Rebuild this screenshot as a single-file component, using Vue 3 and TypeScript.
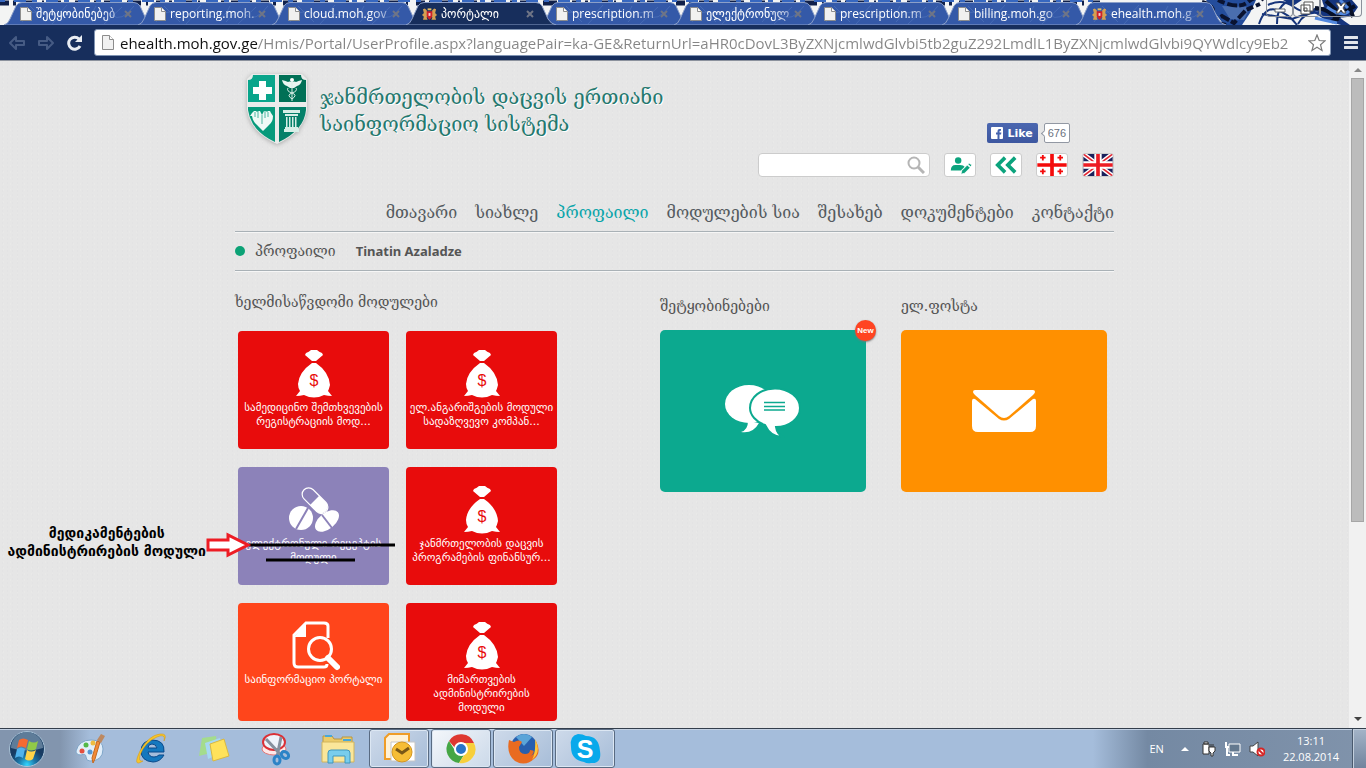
<script setup lang="ts">
import { ref } from 'vue'

interface Tab { title: string; crest?: boolean; active?: boolean }
interface Module { lines: string[]; icon: 'bag' | 'pills' | 'report'; tone: string; replaced?: boolean }

const tabs: Tab[] = [
  { title: 'შეტყობინებებ' },
  { title: 'reporting.moh.' },
  { title: 'cloud.moh.gov' },
  { title: 'პორტალი', crest: true, active: true },
  { title: 'prescription.m' },
  { title: 'ელექტრონულ' },
  { title: 'prescription.m' },
  { title: 'billing.moh.go' },
  { title: 'ehealth.moh.g', crest: true },
]

const nav = ['მთავარი', 'სიახლე', 'პროფაილი', 'მოდულების სია', 'შესახებ', 'დოკუმენტები', 'კონტაქტი']

const modules: Module[] = [
  { lines: ['სამედიცინო შემთხვევების', 'რეგისტრაციის მოდ...'], icon: 'bag', tone: 'red' },
  { lines: ['ელ.ანგარიშგების მოდული', 'სადაზღვევო კომპან...'], icon: 'bag', tone: 'red' },
  { lines: ['ელექტრონული რეცეპტის', 'მოდული'], icon: 'pills', tone: 'violet', replaced: true },
  { lines: ['ჯანმრთელობის დაცვის', 'პროგრამების ფინანსურ...'], icon: 'bag', tone: 'red' },
  { lines: ['საინფორმაციო პორტალი'], icon: 'report', tone: 'orange' },
  { lines: ['მიმართვების', 'ადმინისტრირების', 'მოდული'], icon: 'bag', tone: 'red' },
]

const address = ref('ehealth.moh.gov.ge/Hmis/Portal/UserProfile.aspx?languagePair=ka-GE&ReturnUrl=aHR0cDovL3ByZXNjcmlwdGlvbi5tb2guZ292LmdlL1ByZXNjcmlwdGlvbi9QYWdlcy9Eb2')
const query = ref('')
</script>

<template>
  <div class="desktop">
    <div class="chrome">
      <svg class="floral" viewBox="0 0 1366 25" preserveAspectRatio="xMaxYMin slice" aria-hidden="true">
        <rect width="1366" height="25" fill="#f3f4f4" />
        <path d="M0 3H1100" stroke="#10204a" stroke-width="5" stroke-dasharray="9 4 3 7 14 5 2 8" />
        <path d="M0 1H1100" stroke="#3768c0" stroke-width="2" stroke-dasharray="5 9 12 6" />
        <path d="M1206 0q8 12 18 25h18l8-12 6-13z" fill="#244d9c" />
        <path d="M1222 6l28 1-6 13-14-1z" fill="#4a6eaf" />
        <path d="M1202 2q14 4 10 12t14 11M1218 0q20 10 30 2t16-2M1212 22l10-6 12 7 12-13 14-6" fill="none" stroke="#0a1330" stroke-width="4" stroke-dasharray="7 3 10 2" />
        <path d="M1259 24q6-18 18-14t20 15M1277 24q0-20 13-23M1268 5q14-7 26 2t24 0M1262 14l30 5 34-12M1298 24q8-15 24-10" fill="none" stroke="#17357b" stroke-width="2" />
        <path d="M1283 0l10 6 9-6zM1322 0q3 14 16 17t20-10l-6-7zM1313 12l14 9 14 4h9q-12-8-20-16z" fill="#15357e" />
        <path d="M1315 8q16 1 23 13M1326 1l14 13 15-8M1331 22l18-13M1348 2l5 15" fill="none" stroke="#071027" stroke-width="4" />
        <path d="M1327 7q15 11 22 4M1315 18l22 5M1340 0l8 8" fill="none" stroke="#5288df" stroke-width="3" />
      </svg>

      <div class="tabs" role="tablist">
        <button v-for="(tab, i) in tabs" :key="i" class="tab" :class="{ active: tab.active }" role="tab" type="button">
          <svg class="tab-shape" viewBox="0 0 150 23" preserveAspectRatio="none" aria-hidden="true">
            <path d="M0 23Q4 22 6 17L12 4Q14 .5 18 .5H130Q134 .5 136 4L142 17Q145 22 150 23z" :fill="tab.active ? '#172e5c' : '#3459a8'" stroke="#8b9fc8" />
            <path v-if="!tab.active" d="M18 20q8-14 22-9t23-8M48 22q10-14 24-8t20-10M88 20q11-15 20-7t22-9M100 22l18-17M26 4l16 16" fill="none" stroke="#5478bd" stroke-width="1" opacity=".55" />
          </svg>
          <svg v-if="tab.crest" class="tab-icon crest" viewBox="0 0 16 14" aria-hidden="true">
            <path d="M1 2l2-1 2 2 1 4-1 4 1 2H1l1-3-2-2 2-2zM15 2l-2-1-2 2-1 4 1 4-1 2h5l-1-3 2-2-2-2z" fill="#d4a052" />
            <path d="M5 4h6v5q-1 3-3 4-2-1-3-4z" fill="#cf222b" /><path d="M6 1h4v2H6z" fill="#e4bd62" /><path d="M7 6h2v3H7z" fill="#f3d3ce" />
          </svg>
          <svg v-else class="tab-icon" viewBox="0 0 12 14" aria-hidden="true"><path d="M.5.5h7l4 4v9H.5z" fill="#f1f1f0" stroke="#8d8d8d" /><path d="M7.500.5v4h4" fill="#fff" stroke="#8d8d8d" /></svg>
          <span class="tab-title">{{ tab.title }}</span>
          <svg class="tab-close" viewBox="0 0 8 8" aria-hidden="true"><path d="M1 1l6 6M7 1L1 7" stroke="#6f7586" stroke-width="2" /></svg>
        </button>
      </div>

      <div class="window-buttons">
        <button type="button" aria-label="Minimize"><svg viewBox="0 0 16 14"><path d="M3 8h10v3H3z" fill="#fff" stroke="#5b6068" /></svg></button>
        <button type="button" aria-label="Restore"><svg viewBox="0 0 16 14"><path d="M5 1h9v9H5zM2 4h9v9H2zM5 7h3v3H5z" fill="#fff" stroke="#555" /></svg></button>
        <button type="button" aria-label="Close"><svg viewBox="0 0 16 14"><path d="M3 2h3l2 3 2-3h3l-3 5 3 5h-3L8 9l-2 3H3l3-5z" fill="#fff" stroke="#555" /></svg></button>
      </div>

      <div class="toolbar">
        <button class="tool" type="button" aria-label="Back"><svg viewBox="0 0 18 16"><path d="M8 2L2 8l6 6v-4h8V6H8z" fill="none" stroke="#465b84" stroke-width="2" stroke-linejoin="round" /></svg></button>
        <button class="tool" type="button" aria-label="Forward"><svg viewBox="0 0 18 16"><path d="M10 2l6 6-6 6v-4H2V6h8z" fill="none" stroke="#465b84" stroke-width="2" stroke-linejoin="round" /></svg></button>
        <button class="tool" type="button" aria-label="Reload"><svg viewBox="0 0 18 16"><path d="M14 11a6 6 0 1 1-1-7" fill="none" stroke="#e9edf3" stroke-width="3" /><path d="M16 0v7H9z" fill="#e9edf3" /></svg></button>
        <div class="omnibox">
          <svg class="page-icon" viewBox="0 0 12 15" aria-hidden="true"><path d="M.5.500h7l4 4v10H.5z" fill="#f1f1f1" stroke="#8c8c8c" /><path d="M7.500.5v4h4" fill="#fff" stroke="#8c8c8c" /></svg>
          <input v-model="address" type="text" aria-label="Address" spellcheck="false" />
          <svg class="star" viewBox="0 0 18 18" aria-hidden="true"><path d="M9 1l2.200 5.500 5.800.4-4.500 3.800L14 16.500 9 13.300l-5 3.200 1.500-5.800L1 6.900l5.800-.4z" fill="#fff" stroke="#7b7b7b" stroke-width="1.200" /></svg>
        </div>
        <button class="menu" type="button" aria-label="Menu"><svg viewBox="0 0 14 15"><path d="M1 2.500h12M1 7.500h12M1 12.500h12" stroke="#e2e6ec" stroke-width="3" stroke-linecap="round" /></svg></button>
      </div>
    </div>

    <div class="viewport">
      <div class="page">
        <header class="masthead">
          <svg class="logo" viewBox="0 0 60 70" aria-hidden="true">
            <path d="M5 0H55L60 5V36Q57 58 30 70Q3 58 0 36V5z" fill="#e9ebea" />
            <path d="M6 1h22v27H1V6q5 0 5-5z" fill="#09a58b" /><path d="M32 1h22q0 5 5 5v22H32z" fill="#007056" />
            <path d="M1 33h27v35Q4 57 1 36z" fill="#079a7b" /><path d="M32 33h27v3q-2 20-27 32z" fill="#048069" />
            <path d="M12 7h7v6h6v7h-6v6h-7v-6H6v-7h6z" fill="#fff" />
            <circle cx="45" cy="6" r="2" fill="#fff" />
            <path d="M45 8q-3-1-4 0-2-1-6-2 1 5 5 6l3 2h4l3-2q4-1 5-6-4 1-6 2-1-1-4 0z" fill="#eaf5f1" />
            <path d="M45 7v20M41 14q-2 3 4 5t0 6M49 14q2 3-4 5t0 6" fill="none" stroke="#dcefe8" stroke-width="1" />
            <path d="M5 42l2-3 2-2h2l1 1 1-1h2l2 4 2-4h2l1 1 1-1h2l1 2 2 3q0 6-4 9l-6 6-6-6q-4-3-5-9z" fill="#effaf6" transform="translate(-2)" />
            <path d="M8 38v5M11 37v7M18 37v7M21 38v5M15 41v9" stroke="#079a7b" stroke-width=".7" />
            <path d="M36 36h17v3H36zM38 40h13v2H38zM39 43h1.500v10H39zM42 43h1.500v10H42zM45 43h1.500v10H45zM48 43h1.500v10H48zM38 53h13v2H38zM37 55h15v3H37z" fill="#d6eee7" />
          </svg>
          <h1>ჯანმრთელობის დაცვის ერთიანი<br />საინფორმაციო სისტემა</h1>
          <div class="side">
            <div class="social">
              <button class="like" type="button">
                <svg viewBox="0 0 12 12" aria-hidden="true"><rect width="12" height="12" rx="1" fill="#fff" /><path d="M10 2H8.500Q6.500 2 6.500 4v1.500H5v2h1.500V12h2V7.500h1.500l.4-2H8.500v-1q0-.7.7-.7H10z" fill="#4463ae" /></svg>Like
              </button>
              <span class="count">676</span>
            </div>
            <div class="tools">
              <label class="search">
                <input v-model="query" type="text" aria-label="ძიება" />
                <svg viewBox="0 0 18 18" aria-hidden="true"><circle cx="7" cy="7" r="5.500" fill="none" stroke="#b5b5b5" stroke-width="2" /><path d="M11 11l6 6" stroke="#b5b5b5" stroke-width="3" /></svg>
              </label>
              <button class="square" type="button" aria-label="Edit profile">
                <svg viewBox="0 0 32 24"><circle cx="14" cy="7" r="3.500" fill="#0ba37d" /><path d="M6 18q0-6 5-6h5q4 0 5 2l-4 4z" fill="#0ba37d" /><path d="M18 18l6-6 3 3-6 6-4 1zM24.500 11l1.500-1 3 2-1.500 2z" fill="#0ba37d" stroke="#fff" stroke-width=".8" /></svg>
              </button>
              <button class="square" type="button" aria-label="Back">
                <svg viewBox="0 0 32 24"><path d="M15 4l-8 8 8 8M26 4l-8 8 8 8" fill="none" stroke="#0ba37d" stroke-width="4" /></svg>
              </button>
              <button class="square" type="button" aria-label="ქართული">
                <svg viewBox="0 0 32 24"><path d="M6 1v6M3 4h6M25 1v6M22 4h6M6 16v6M3 19h6M25 16v6M22 19h6" stroke="#f40b0b" stroke-width="2" /><path d="M16 0v24M0 12h32" stroke="#f40b0b" stroke-width="4" /></svg>
              </button>
              <button class="square" type="button" aria-label="English">
                <svg viewBox="0 0 32 24"><rect width="32" height="24" fill="#19205c" /><path d="M0 0l32 24M32 0L0 24" stroke="#fff" stroke-width="5" /><path d="M0 0l32 24M32 0L0 24" stroke="#e32631" stroke-width="1.800" /><path d="M16 0v24M0 12h32" stroke="#fff" stroke-width="8" /><path d="M16 0v24M0 12h32" stroke="#ed1c24" stroke-width="4" /></svg>
              </button>
            </div>
          </div>
        </header>

        <nav class="nav"><a v-for="(item, i) in nav" :key="item" href="#" :class="{ current: i === 2 }">{{ item }}</a></nav>

        <div class="crumbs"><i class="dot"></i><span>პროფაილი</span><b>Tinatin Azaladze</b></div>

        <main class="content">
          <section class="modules">
            <h2>ხელმისაწვდომი მოდულები</h2>
            <div class="grid">
              <div v-for="(m, i) in modules" :key="i" class="cell">
                <a href="#" class="tile" :class="m.tone">
                  <svg v-if="m.icon === 'bag'" viewBox="0 0 52 50" aria-hidden="true">
                    <path d="M18 4q3-1 5-3h6q2 2 5 3l1 2-7 6h-4l-7-6z" fill="#fff" />
                    <path d="M24 14h4q13 9 14 22-1 4-2 6l4 5q-4 0-8-1-10 5-20 0-4 1-8 1l4-5q-2-3-2-7 1-12 14-21z" fill="#fff" />
                    <text x="26" y="37" text-anchor="middle" font-family="Liberation Sans, sans-serif" font-size="16" fill="#e80c0c">$</text>
                  </svg>
                  <svg v-else-if="m.icon === 'pills'" viewBox="0 0 52 50" aria-hidden="true">
                    <g transform="rotate(45 27 15)"><rect x="12" y="9" width="31" height="13" rx="6.500" fill="none" stroke="#fff" stroke-width="1.200" /><path d="M27 9h9a6.500 6.500 0 0 1 0 13h-9z" fill="#fff" /></g>
                    <circle cx="13" cy="33" r="12" fill="#fff" /><path d="M8 44L20 23" stroke="#8c82b9" stroke-width="2" />
                    <ellipse cx="39" cy="36" rx="14" ry="8" transform="rotate(-39 39 36)" fill="#fff" /><path d="M34 30l10 13" stroke="#8c82b9" stroke-width="2" />
                  </svg>
                  <svg v-else viewBox="0 0 52 50" aria-hidden="true">
                    <path d="M40 17V5q0-3-4-3H18L6 14v28q0 4 4 4h26q3 0 3-3" fill="none" stroke="#fff" stroke-width="3" /><path d="M18 2v14H6z" fill="#fff" />
                    <circle cx="32" cy="28" r="11.500" fill="#ff451b" stroke="#fff" stroke-width="3" /><path d="M40 37l9 9" stroke="#fff" stroke-width="6" stroke-linecap="round" />
                  </svg>
                  <span v-for="line in m.lines" :key="line" class="line">{{ line }}</span>
                </a>
                <div v-if="m.replaced" class="note">
                  <p>მედიკამენტების<br />ადმინისტრირების მოდული</p>
                  <svg viewBox="0 0 190 32" aria-hidden="true">
                    <path d="M43 15H189M60 30H149" stroke="#000" stroke-width="3" />
                    <path d="M2 10h20V5l20 10-20 10v-5H2z" fill="#fff" stroke="#ed1c24" stroke-width="3" />
                  </svg>
                </div>
              </div>
            </div>
          </section>
          <section class="panel">
            <h2>შეტყობინებები</h2>
            <a href="#" class="card teal" aria-label="შეტყობინებები">
              <svg viewBox="0 0 76 54"><ellipse cx="24" cy="20" rx="24" ry="19" fill="#fff" /><path d="M23 37q0 9-7 11 12 2 18-9z" fill="#fff" /><path d="M50 4.500c14 0 25 9 25 19.500S64 43 51 43q1 8 8 10-13 1-19-12C31 38 25 31 25 24 25 13 36 4.500 50 4.500z" fill="#fff" stroke="#0ca98f" stroke-width="2" /><path d="M39 18.500h21M39 22.500h21M39 26h21" stroke="#0ca98f" stroke-width="1.500" /></svg>
              <span class="badge">New</span>
            </a>
          </section>
          <section class="panel">
            <h2>ელ.ფოსტა</h2>
            <a href="#" class="card amber" aria-label="ელ.ფოსტა">
              <svg class="mail" viewBox="0 0 64 44"><path d="M3 1h58q2 0 2 2 0 1-2 3L37 27q-5 4-10 0L3 6Q1 4 1 3q0-2 2-2z" fill="#fff" /><path d="M0 12q0-3 3-2l24 20q5 3 10 0L61 10q3-1 3 2v25q0 6-6 6H6q-6 0-6-6z" fill="#fff" /></svg>
            </a>
          </section>
        </main>
      </div>
      <div class="scrollbar" aria-hidden="true"><i class="up"></i><i class="thumb"></i><i class="down"></i></div>
    </div>

    <footer class="taskbar">
      <button class="start" type="button" aria-label="Start">
        <svg viewBox="0 0 40 38"><defs><radialGradient id="orb" cy=".95"><stop offset="0" stop-color="#31d6ff" /><stop offset=".5" stop-color="#1b75a6" /><stop offset="1" stop-color="#183b62" /></radialGradient></defs><circle cx="20" cy="19" r="17.500" fill="url(#orb)" stroke="#aac3d7" /><path d="M4 18a16 16 0 0 1 32 0q-16 5-32 0z" fill="#b4cddd" opacity=".45" /><path d="M12 10q4-3 9 0l-2 8q-5-3-9 0z" fill="#f46a32" /><path d="M22 11q5 3 9 0l-2 8q-5 3-9 0z" fill="#91c947" /><path d="M10 19q4-3 8 0l-2 9q-4-3-8 0z" fill="#50b3ed" /><path d="M20 20q4 3 9 0l-3 9q-4 3-8 0z" fill="#ffd348" /></svg>
      </button>
      <button class="app" type="button" aria-label="Paint"><svg viewBox="0 0 34 34"><path d="M3 19Q6 8 18 8q12 0 12 9 0 12-13 12-4 0-4-4t-5-2q-5 0-5-4z" fill="#e1eefa" stroke="#7fa6c9" /><circle cx="9" cy="19" r="2.500" fill="#e44f40" /><circle cx="13" cy="13" r="2.500" fill="#53b848" /><circle cx="20" cy="11" r="2.500" fill="#eebc40" /><circle cx="17" cy="20" r="2.500" fill="#5596d4" /><path d="M27 10l-5 17-2 4-1-5 5-17z" fill="#f38a36" stroke="#c26821" /><path d="M24 8l4-6 4 2-4 7z" fill="#bd8961" /></svg></button>
      <button class="app" type="button" aria-label="Internet Explorer"><svg viewBox="0 0 34 34"><path d="M29 20H13q1 5 6 5 3 0 5-2h5q-4 7-11 7Q6 29 6 19T17 8q13 0 12 12zM13 16h9q-1-4-5-4t-4 4z" fill="#1578be" fill-rule="evenodd" stroke="#0b4a8b" /><path d="M8 29Q-3 36 5 19 14 3 25 2q8-1 4 7 2-8-7-4Q10 10 5 23q-2 7 3 6z" fill="#f7c52a" stroke="#d5940d" stroke-width=".5" /></svg></button>
      <button class="app" type="button" aria-label="Sticky Notes"><svg viewBox="0 0 34 34"><path d="M5 6l14-2 2 15L2 24z" fill="#a4dc8d" /><path d="M8 11l15-5 4 14-16 7z" fill="#a7d8f2" /><path d="M13 12l14-5 5 17-16 5z" fill="#ffe25b" stroke="#d9b843" /></svg></button>
      <button class="app" type="button" aria-label="Snipping Tool"><svg viewBox="0 0 34 34"><ellipse cx="15" cy="17" rx="12" ry="6" fill="#ffe8e8" stroke="#e47777" /><ellipse cx="15" cy="10" rx="11" ry="8" fill="#eef3fb" stroke="#db3036" stroke-width="2" /><path d="M7 7l15 16M22 5l-4 20" stroke="#85909e" stroke-width="3" /><ellipse cx="26" cy="23" rx="4" ry="3" fill="none" stroke="#2c83c7" stroke-width="3" transform="rotate(40 26 23)" /><ellipse cx="18" cy="28" rx="3" ry="4" fill="none" stroke="#2c83c7" stroke-width="3" /></svg></button>
      <button class="app" type="button" aria-label="Explorer"><svg viewBox="0 0 34 34"><path d="M2 7V4h9l2 3h8V5h10v24H2z" fill="#eccb69" stroke="#b79640" /><path d="M4 3h7v2H4zM22 7h8v2h-8z" fill="#48a7d8" /><path d="M1 10h32v20H1z" fill="#fae69a" stroke="#d1b45d" /><path d="M7 31V21q0-3 3-3h16q3 0 3 3v10h-5v-7H12v7z" fill="#79cdec" stroke="#4097bd" /></svg></button>
      <button class="app running" type="button" aria-label="Outlook"><svg viewBox="0 0 34 34"><path d="M3 27V6l4-4h20v25z" fill="#fff2d7" stroke="#ef9d28" stroke-width="2" /><path d="M9 10h24v19H9z" fill="#fff" stroke="#c6c6c6" /><circle cx="20" cy="20" r="10" fill="#f6bd36" stroke="#d5961d" /><path d="M14 17l6 4 7-5" fill="none" stroke="#795717" stroke-width="3" /></svg></button>
      <button class="app running front" type="button" aria-label="Chrome"><svg viewBox="0 0 34 34"><circle cx="17" cy="17" r="14" fill="#fff" /><path d="M5 9a14 14 0 0 1 25 2H17q-4 0-6 5z" fill="#de3831" /><path d="M5 9l7 11q2 4 8 3l-5 8A14 14 0 0 1 5 9z" fill="#45a645" /><path d="M30 11a14 14 0 0 1-15 20l7-11q3-5-1-9z" fill="#f7cf3b" /><circle cx="17" cy="17" r="6" fill="#2875c8" stroke="#fff" stroke-width="2" /></svg></button>
      <button class="app running" type="button" aria-label="Firefox"><svg viewBox="0 0 34 34"><circle cx="18" cy="15" r="13" fill="#275fae" /><path d="M10 5q8-6 16 0l-8 9z" fill="#5aa4d8" /><path d="M3 8l5 2q5-3 8 0l-3 5q0 7 6 7 5 0 5-4 7 0 1 6 6-3 5-15 6 12-2 18-9 8-19 2Q0 22 3 8z" fill="#e96b20" /><path d="M29 7q7 13-3 21 4-7 3-21z" fill="#ffc63b" /></svg></button>
      <button class="app running" type="button" aria-label="Skype"><svg viewBox="0 0 34 34"><path d="M10 2q5 0 8 2 13 0 14 15 2 13-9 12-4 1-7-1Q3 28 3 15q-2-11 7-13z" fill="#08a9eb" /><text x="17" y="26" text-anchor="middle" font-family="Liberation Sans, sans-serif" font-weight="700" font-size="25" fill="#fff">S</text></svg></button>
      <div class="tray">
        <span class="lang">EN</span>
        <i class="caret"></i>
        <svg class="tray-icon" viewBox="0 0 16 16" aria-hidden="true"><path d="M2 3h6v10H2zM3 1h4v2H3z" fill="#fff" stroke="#333" /><path d="M8 6h6v4l-2 2v3h-2v-3L8 10zM10 3v3M12 3v3" fill="#fff" stroke="#333" /></svg>
        <svg class="tray-icon" viewBox="0 0 16 16" aria-hidden="true"><path d="M4 3h11v8H4z" fill="#64798f" stroke="#fff" /><path d="M8 11v3h5M1 1v5h3M2 6v8h3" fill="none" stroke="#fff" stroke-width="2" /></svg>
        <svg class="tray-icon" viewBox="0 0 16 16" aria-hidden="true"><path d="M1 5h3l5-4v14l-5-4H1z" fill="#fff" stroke="#444" /><circle cx="12" cy="11" r="3.500" fill="#fff" stroke="#d62525" stroke-width="2" /><path d="M10 9l4 4" stroke="#d62525" stroke-width="2" /></svg>
        <time class="clock">13:11<br />22.08.2014</time>
        <button class="peek" type="button" aria-label="Show desktop"></button>
      </div>
    </footer>
  </div>
</template>

<style>
body { margin: 0; }
</style>

<style scoped>
* { box-sizing: border-box; }
button { font: inherit; padding: 0; border: 0; background: none; }
a { text-decoration: none; }
svg { display: block; }
.desktop { height: 100vh; display: flex; flex-direction: column; overflow: hidden; font-family: "DejaVu Sans", sans-serif; color: #555; }

.chrome { position: relative; flex: none; background: #172e5c; border-bottom: 1px solid #8c929d; }
.floral { position: absolute; inset: 0 0 auto; width: 100%; height: 25px; }
.tabs { position: relative; display: flex; height: 25px; padding: 2px 0 0 4px; }
.tab { position: relative; flex: none; width: 150px; height: 23px; margin-right: -16px; padding: 0 16px; display: flex; align-items: center; color: #fff; font: 12px "Open Sans", "DejaVu Sans", sans-serif; }
.tab.active { z-index: 1; }
.tab-shape { position: absolute; inset: 0; width: 100%; height: 100%; }
.tab-icon { position: relative; flex: none; width: 12px; height: 14px; margin-right: 4px; }
.tab-icon.crest { width: 15px; }
.tab-title { position: relative; flex: 1; white-space: nowrap; text-align: left; mask-image: linear-gradient(to right, #000 75%, #0006); }
.tab-close { position: relative; flex: none; width: 8px; height: 8px; margin: 0 6px 0 2px; }
.window-buttons { position: absolute; top: 0; right: 4px; display: flex; }
.window-buttons button { width: 27px; height: 17px; border: 1px solid #8b919b; border-top: 0; border-radius: 0 0 4px 4px; }
.window-buttons button:last-child { width: 42px; }
.window-buttons svg { width: 16px; height: 14px; margin: 0 auto; }
.toolbar { display: flex; align-items: center; height: 35px; padding: 0 8px; }
.tool { width: 18px; height: 16px; margin-right: 11px; }
.omnibox { flex: 1; display: flex; align-items: center; height: 27px; margin-left: -1px; padding: 0 4px 0 7px; background: #fff; border: 1px solid #8094b3; border-radius: 3px; }
.page-icon { width: 12px; height: 15px; margin-right: 6px; }
.omnibox input { flex: 1; min-width: 0; height: 25px; padding: 0; border: 0; outline: 0; font: 15px "Open Sans", sans-serif; color: transparent; background: linear-gradient(to right, #111 138px, #858585 138px); background-clip: text; }
.star { flex: none; width: 18px; height: 18px; }
.menu { width: 14px; height: 15px; margin-left: 13px; }

.viewport { flex: 1; min-height: 0; display: flex; background-color: #e6e6e6; background-image: radial-gradient(#e3e3e4 1px, transparent 1px), radial-gradient(#e9e9e8 1px, transparent 1px); background-size: 5px 4px, 7px 6px; }
.page { flex: 1; max-width: 879px; margin: 0 auto; }
.scrollbar { flex: none; width: 17px; padding: 7px 2px; display: flex; flex-direction: column; align-items: center; background: #f1f1f1; }
.up, .down { border: 4px solid transparent; }
.up { border-top: 0; border-bottom-color: #888; }
.down { border-bottom: 0; border-top-color: #444; margin-top: auto; }
.thumb { width: 13px; height: 68%; margin-top: 6px; background: #bcbcbc; border: 1px solid #a6a6a6; }

.masthead { display: flex; height: 117px; padding: 13px 0 1px 12px; }
.logo { flex: none; width: 60px; height: 70px; margin-right: 13px; filter: drop-shadow(0 1px 2px #aaa); }
h1 { flex: 1; margin: 10px 0 0; font: 20px/27px "DejaVu Serif", serif; color: #24786e; white-space: nowrap; text-shadow: 1px 1px #fff; }
.side { align-self: flex-end; display: flex; flex-direction: column; gap: 10px; }
.social { display: flex; align-self: flex-end; gap: 6px; margin-right: 44px; }
.like { display: flex; align-items: center; gap: 4px; height: 20px; padding: 0 5px 0 4px; border-radius: 2px; background: linear-gradient(#4b67b0, #3d57a0); color: #fff; font: bold 11px "DejaVu Sans", sans-serif; }
.like svg { width: 12px; height: 12px; }
.count { position: relative; height: 20px; padding: 0 3px; border: 1px solid #9298a3; border-radius: 2px; background: #fff; color: #6a7180; font: 11px/18px "Liberation Sans", sans-serif; }
.count::before { content: ""; position: absolute; left: -3px; top: 7px; width: 4px; height: 4px; background: #fff; border: solid #9298a3; border-width: 0 0 1px 1px; transform: rotate(45deg); }
.tools { display: flex; gap: 14px; }
.search { display: flex; align-items: center; width: 172px; height: 24px; padding-right: 4px; border: 1px solid #ccc; border-radius: 4px; background: #fff; }
.search input { flex: 1; min-width: 0; border: 0; outline: 0; background: none; }
.search svg { width: 18px; height: 18px; }
.square { width: 32px; height: 24px; border: 1px solid #ccc; border-radius: 3px; background: #fff; overflow: hidden; }
.square svg { width: 100%; height: 100%; }
.nav { display: flex; justify-content: flex-end; gap: 18px; padding: 25px 0 8px; border-bottom: 1px solid #a9b1b6; box-shadow: 0 1px #f6f6f6; }
.nav a { font: 16px/20px "DejaVu Serif", serif; color: #555b60; white-space: nowrap; }
.nav .current { color: #0ba5aa; }
.crumbs { display: flex; align-items: center; height: 39px; border-bottom: 1px solid #a9b1b6; box-shadow: 0 1px #f6f6f6; font: 14px/20px "DejaVu Serif", serif; }
.dot { width: 10px; height: 10px; margin-right: 10px; border-radius: 50%; background: #0ca276; }
.crumbs b { margin-left: 20px; font: bold 13px "Noto Sans", sans-serif; }
.content { display: flex; gap: 35px; padding-right: 7px; }
.modules { flex: 1; padding-top: 21px; }
h2 { margin: 0; font: 14px/20px "DejaVu Serif", serif; white-space: nowrap; }
.grid { display: grid; grid-template-columns: 151px 151px; gap: 18px 17px; padding: 19px 3px 0; }
.cell { position: relative; }
.tile { display: flex; flex-direction: column; align-items: center; height: 118px; padding-top: 18px; border-radius: 4px; color: #fff; font-size: 11px; line-height: 14px; }
.tile svg { flex: none; width: 52px; height: 50px; margin-bottom: 2px; }
.line { white-space: nowrap; }
.red { background: #e80c0c; }
.violet { background: #8c82b9; }
.orange { background: #ff451b; }
.note { position: absolute; top: 57px; right: -7px; display: flex; align-items: flex-start; color: #000; }
.note p { margin: 0; font: bold 14px/18px "DejaVu Sans", sans-serif; text-align: center; white-space: nowrap; }
.note svg { flex: none; width: 190px; height: 32px; margin-top: 6px; }
.panel { padding-top: 25px; }
.panel h2 { margin-bottom: 14px; }
.card { position: relative; display: flex; align-items: center; justify-content: center; width: 206px; height: 162px; border-radius: 5px; }
.card svg { width: 76px; height: 54px; }
.card .mail { width: 64px; height: 44px; }
.teal { background: #0ca98f; }
.amber { background: #ff9000; }
.badge { position: absolute; top: -10px; right: -10px; width: 21px; height: 21px; border-radius: 50%; background: #ff4422; color: #fff; font: bold 8px/21px "Liberation Sans", sans-serif; text-align: center; box-shadow: 0 1px 2px #777; }

.taskbar { flex: none; display: flex; height: 40px; border-top: 1px solid #333e4c; background: linear-gradient(to right, #8295ae 60px, #a5bddb 90px, #a5bddb 80%, #7489a3 84%, #8093ab); box-shadow: inset 0 1px #c3d1e3; }
.start { width: 54px; }
.start svg { width: 40px; height: 38px; margin: 0 auto; }
.app { width: 62px; display: flex; align-items: center; justify-content: center; margin: 0; }
.app svg { width: 34px; height: 34px; }
.start + .app { margin-left: 5px; }
.running { width: 60px; margin-right: 2px; border: 1px solid #596b82; border-radius: 3px; background: linear-gradient(135deg, #cedaea, #a7bdd8); box-shadow: inset 0 0 0 1px #dce7f3; }
.running.front { background: linear-gradient(135deg, #f4f7fb, #cbd9e9); }
.tray { margin-left: auto; display: flex; align-items: center; color: #fff; font: 11px/16px "Open Sans", sans-serif; }
.lang { margin-right: 17px; }
.caret { border: 4px solid transparent; border-top: 0; border-bottom-color: #fff; margin-right: 12px; }
.tray-icon { width: 16px; height: 16px; margin-right: 8px; }
.clock { margin: 0 13px 0 10px; text-align: center; }
.peek { align-self: stretch; width: 14px; border-left: 1px solid #49596d; background: linear-gradient(#a4b4c8, #71849d); box-shadow: inset 1px 1px #c3cfdd; }
</style>
